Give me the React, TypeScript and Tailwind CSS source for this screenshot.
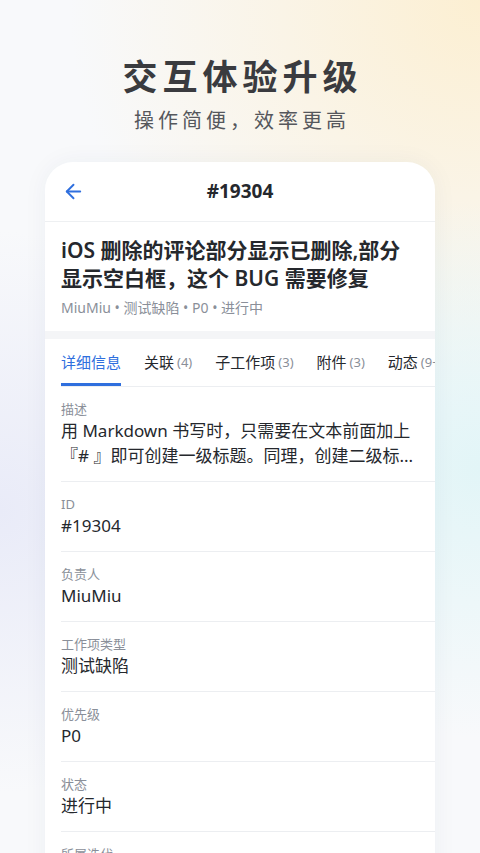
import React from 'react';
import { ArrowLeft } from 'lucide-react';

const tabs = [
    { name: '详细信息', count: '' },
    { name: '关联', count: '(4)' },
    { name: '子工作项', count: '(3)' },
    { name: '附件', count: '(3)' },
    { name: '动态', count: '(9+)' },
];

const fields = [
    { label: 'ID', value: '#19304' },
    { label: '负责人', value: 'MiuMiu' },
    { label: '工作项类型', value: '测试缺陷' },
    { label: '优先级', value: 'P0' },
    { label: '状态', value: '进行中' },
    { label: '所属迭代', value: 'Sprint 12' },
];

const Field = ({ label, children }: { label: string; children: React.ReactNode }) => (
    <div className="ml-4 border-b border-[#eceef1] pt-[13px] pb-[13px] pr-4">
        <div className="text-[13px] leading-[18px] text-[#8a8f99]">{label}</div>
        <div className="text-[17px] leading-[25px] text-[#25282d]">{children}</div>
    </div>
);

export default function App() {
    return (
        <div className="relative h-[853px] w-[480px] overflow-hidden bg-[#f8f9fb] font-['Noto_Sans','Noto_Sans_CJK_SC',sans-serif]">
            {/* soft colour washes behind the content */}
            <div className="pointer-events-none absolute inset-0 bg-[radial-gradient(circle_at_100%_0%,#fcefd2_0%,rgba(252,239,210,0.5)_20%,rgba(252,239,210,0)_42%)]" />
            <div className="pointer-events-none absolute inset-0 bg-[radial-gradient(circle_at_0%_60%,#e9ebf8_0%,rgba(233,235,248,0)_40%)]" />
            <div className="pointer-events-none absolute inset-0 bg-[radial-gradient(circle_at_100%_55%,#e2f5f7_0%,rgba(226,245,247,0)_40%)]" />

            <div className="relative flex flex-col items-center pt-[52px]">
                <h1 className="pl-[5px] text-[35px] leading-[46px] font-bold tracking-[5px] text-[#3a3b3f] font-['Noto_Sans_CJK_SC',sans-serif]">
                    交互体验升级
                </h1>
                <p className="mt-2 pl-[4px] text-[20px] leading-[28px] tracking-[4px] text-[#55575c] font-['Noto_Sans_CJK_SC',sans-serif]">
                    操作简便，效率更高
                </p>

                <div className="mt-[28px] w-[390px] overflow-hidden rounded-t-[28px] bg-white shadow-[0_0_24px_rgba(40,50,90,0.05)]">
                    {/* header */}
                    <div className="relative flex h-[60px] items-center justify-center border-b border-[#eef0f2]">
                        <ArrowLeft className="absolute left-[17px] text-[#2f6fde]" size={23} strokeWidth={2} />
                        <span className="text-[19px] font-bold text-[#25282d]">#19304</span>
                    </div>

                    {/* title */}
                    <div className="px-4 pt-[14px] pb-[13px]">
                        <h2 className="text-[21px] leading-[28px] font-semibold text-[#25282d]">
                            iOS 删除的评论部分显示已删除,部分显示空白框，这个 BUG 需要修复
                        </h2>
                        <div className="mt-[6px] text-[14px] leading-[20px] text-[#8a8f99]">
                            MiuMiu • 测试缺陷 • P0 • 进行中
                        </div>
                    </div>

                    <div className="h-2 bg-[#f4f5f7]" />

                    {/* tabs */}
                    <div className="ml-4 flex h-[48px] items-stretch gap-[23px] overflow-hidden whitespace-nowrap border-b border-[#eceef1]">
                        {tabs.map((t, i) => (
                            <div
                                key={t.name}
                                className={`flex items-center border-b-[3px] pt-[3px] text-[15px] ${i === 0 ? 'border-[#2f6fde] text-[#2f6fde]' : 'border-transparent text-[#25282d]'}`}
                            >
                                {t.name}
                                {t.count && <span className="ml-[3px] text-[13px] text-[#8a8f99]">{t.count}</span>}
                            </div>
                        ))}
                    </div>

                    {/* fields */}
                    <Field label="描述">
                        用 Markdown 书写时，只需要在文本前面加上『# 』即可创建一级标题。同理，创建二级标...
                    </Field>
                    {fields.map((f) => (
                        <Field key={f.label} label={f.label}>
                            {f.value}
                        </Field>
                    ))}
                </div>
            </div>
        </div>
    );
}
